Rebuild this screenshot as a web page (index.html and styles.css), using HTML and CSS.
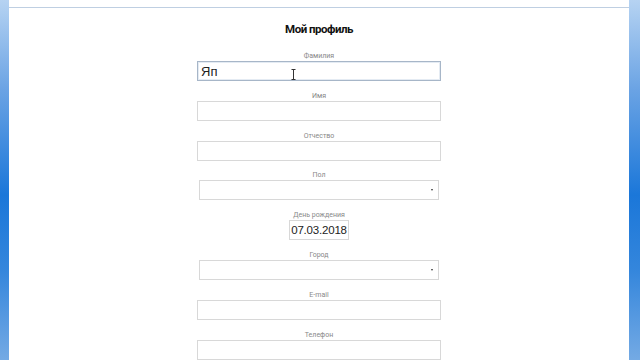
FILE: index.html
```html
<!DOCTYPE html>
<html lang="ru">
<head>
<meta charset="utf-8">
<title>Мой профиль</title>
<link rel="stylesheet" href="styles.css">
</head>
<body>
<div class="page">
  <div class="topline"></div>
  <h1 class="title">Мой профиль</h1>
  <form class="form">
    <div class="field">
      <label class="label">Фамилия</label>
      <div class="input focused"><span class="value">Яп</span></div>
    </div>
    <div class="field">
      <label class="label">Имя</label>
      <div class="input"></div>
    </div>
    <div class="field">
      <label class="label">Отчество</label>
      <div class="input"></div>
    </div>
    <div class="field">
      <label class="label">Пол</label>
      <div class="select"></div>
    </div>
    <div class="field">
      <label class="label">День рождения</label>
      <div class="date">07.03.2018</div>
    </div>
    <div class="field">
      <label class="label">Город</label>
      <div class="select"></div>
    </div>
    <div class="field">
      <label class="label">E-mail</label>
      <div class="input"></div>
    </div>
    <div class="field">
      <label class="label">Телефон</label>
      <div class="input"></div>
    </div>
  </form>
  <svg class="cursor" width="5" height="11" viewBox="0 0 5 11">
    <path d="M0.5 0.5H4.5M2.5 0.5V10.5M0.5 10.5H4.5" stroke="#333" stroke-width="1" fill="none"/>
  </svg>
</div>
</body>
</html>
```

FILE: styles.css
```css
html, body {
  margin: 0;
  padding: 0;
  height: 360px;
  overflow: hidden;
}
body {
  background: linear-gradient(to bottom, #b6d3f2 0px, #6aa3e4 90px, #1b77d9 195px, #3486dc 270px, #74aae4 360px);
  font-family: Roboto, "Liberation Sans", sans-serif;
}
.page {
  position: relative;
  margin: 0 11px 0 9px;
  background: #fff;
  height: 360px;
  padding-top: 7px;
  box-sizing: border-box;
}
.topline {
  height: 0;
  border-top: 1px solid #bfcfe2;
}
.title {
  margin: 13px 0 0;
  font-family: Roboto, "Liberation Sans", sans-serif;
  font-size: 11.5px;
  line-height: 16px;
  font-weight: bold;
  text-align: center;
  color: #111;
  letter-spacing: -0.5px;
}
.form {
  width: 244px;
  margin: 14px auto 0;
  display: flex;
  flex-direction: column;
  align-items: center;
}
.field {
  width: 100%;
  display: flex;
  flex-direction: column;
  align-items: center;
  margin-bottom: 9.8px;
}
.label {
  display: block;
  font-size: 7px;
  line-height: 10px;
  color: #888;
  text-align: center;
}
.input {
  width: 100%;
  height: 20px;
  box-sizing: border-box;
  border: 1px solid #d8d8d8;
  display: flex;
  align-items: center;
  padding-left: 3px;
}
.input.focused {
  border-color: #a7b6c8;
  box-shadow: inset 0 0 0 1px #e4ebf3;
}
.value {
  font-family: "Liberation Sans", Arial, sans-serif;
  font-size: 13px;
  color: #222;
}
.select {
  position: relative;
  width: 240px;
  height: 20px;
  box-sizing: border-box;
  border: 1px solid #d8d8d8;
}
.select::after {
  content: "";
  position: absolute;
  right: 5px;
  top: 8px;
  border-left: 1.5px solid transparent;
  border-right: 1.5px solid transparent;
  border-top: 2.5px solid #333;
}
.date {
  width: 60px;
  height: 20px;
  box-sizing: border-box;
  border: 1px solid #d8d8d8;
  font-family: "Liberation Sans", Arial, sans-serif;
  font-size: 11.5px;
  line-height: 18px;
  color: #222;
  text-align: center;
  letter-spacing: -0.2px;
}
.cursor {
  position: absolute;
  left: 282px;
  top: 69px;
}
```
